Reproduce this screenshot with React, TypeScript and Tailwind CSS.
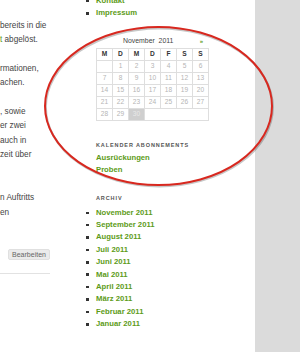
import React from "react";

const font = { fontFamily: '"Liberation Sans", Arial, sans-serif' };

function Bullet({ children }: { children: React.ReactNode }) {
  return (
    <li className="flex items-center h-[12.4px]">
      <span className="w-[10px] flex items-center">
        <span className="block w-[2.5px] h-[2.5px] bg-[#333]" />
      </span>
      <a className="text-[7.7px] font-bold text-[#5d9b18] leading-[12.4px] whitespace-nowrap">{children}</a>
    </li>
  );
}

export default function App() {
  const heads = ["M", "D", "M", "D", "F", "S", "S"];
  const rows: (number | null)[][] = [
    [null, 1, 2, 3, 4, 5, 6],
    [7, 8, 9, 10, 11, 12, 13],
    [14, 15, 16, 17, 18, 19, 20],
    [21, 22, 23, 24, 25, 26, 27],
  ];
  const months = [
    "November 2011",
    "September 2011",
    "August 2011",
    "Juli 2011",
    "Juni 2011",
    "Mai 2011",
    "April 2011",
    "März 2011",
    "Februar 2011",
    "Januar 2011",
  ];
  const cell = "h-[12px] border-r border-b border-[#dedede] flex items-center justify-center text-[6.6px]";
  return (
    <div className="relative w-[300px] h-[352px] overflow-hidden bg-white flex" style={font}>
      {/* main content column */}
      <div className="w-[50px] shrink-0 pt-[18.7px] text-[8.2px] leading-[14.6px] text-[#444] whitespace-nowrap">
        <p className="mb-[13.8px]">
          bereits in die
          <br />
          <span className="text-[#5d9b18]">t</span> abgelöst.
        </p>
        <p className="mb-[13.8px]">
          rmationen,
          <br />
          achen.
        </p>
        <p className="mb-[13.8px]">
          , sowie
          <br />
          er zwei
          <br />
          auch in
          <br />
          zeit über
          <br />
          &nbsp;
        </p>
        <p>
          n Auftritts
          <br />
          en
        </p>
        <div className="mt-[28.5px] flex justify-end">
          <span className="h-[11px] w-[42px] rounded-[2px] bg-[#ebebeb] border border-[#e0e0e0] text-[7px] leading-[9px] text-[#666] flex items-center justify-center">
            Bearbeiten
          </span>
        </div>
        <div className="mt-[13px] border-t border-[#e2e2e2]" />
      </div>

      {/* sidebar */}
      <div className="ml-[36px] w-[169px] shrink-0">
        <ul className="-mt-[5.2px]">
          <Bullet>Kontakt</Bullet>
          <Bullet>Impressum</Bullet>
        </ul>

        <div className="pl-[10px]">
          <div className="relative mt-[17px] w-[113px] h-[8px] text-[6.9px] leading-[8px] text-[#444]">
            <div className="pl-[27px] whitespace-nowrap">November&nbsp; 2011</div>
            <span className="absolute right-[6px] top-0 text-[6px] leading-[8px] font-bold text-[#5d9b18]">»</span>
          </div>

          <div className="mt-[3px] w-[113px] grid grid-cols-7 border-l border-t border-[#dedede]">
            {heads.map((h, i) => (
              <div key={"h" + i} className={cell + " text-[#333] font-semibold"}>
                {h}
              </div>
            ))}
            {rows.flat().map((d, i) => (
              <div key={"d" + i} className={cell + " text-[#b5b5b5]"}>
                {d ?? ""}
              </div>
            ))}
            <div className={cell + " text-[#b5b5b5]"}>28</div>
            <div className={cell + " text-[#b5b5b5]"}>29</div>
            <div className={cell + " text-[#e9e9e9] bg-[#cfcfcf]"}>30</div>
            <div className={cell + " col-span-4"} />
          </div>

          <div className="mt-[20px] text-[5.5px] leading-[8px] tracking-[0.9px] font-semibold text-[#555] whitespace-nowrap">
            KALENDER ABONNEMENTS
          </div>
          <div className="mt-[3px] text-[7.7px] leading-[12px] font-bold text-[#5d9b18]">
            <div>Ausrückungen</div>
            <div>Proben</div>
          </div>

          <div className="mt-[18px] text-[5.5px] leading-[8px] tracking-[0.9px] font-semibold text-[#555]">
            ARCHIV
          </div>
        </div>
        <ul className="mt-[5px]">
          {months.map((m) => (
            <Bullet key={m}>{m}</Bullet>
          ))}
        </ul>
      </div>

      {/* gray right edge */}
      <div className="flex-1 bg-[#dbdbdb]" />

      {/* red ellipse annotation */}
      <svg
        className="absolute left-0 top-0 pointer-events-none"
        width="300"
        height="352"
        viewBox="0 0 300 352"
      >
        <ellipse cx="159.3" cy="107.3" rx="113.5" ry="79" fill="none" stroke="rgba(0,0,0,0.22)" strokeWidth="2.2" />
        <ellipse cx="158.5" cy="106" rx="113.5" ry="79" fill="none" stroke="#d8281f" strokeWidth="2" />
      </svg>
    </div>
  );
}
